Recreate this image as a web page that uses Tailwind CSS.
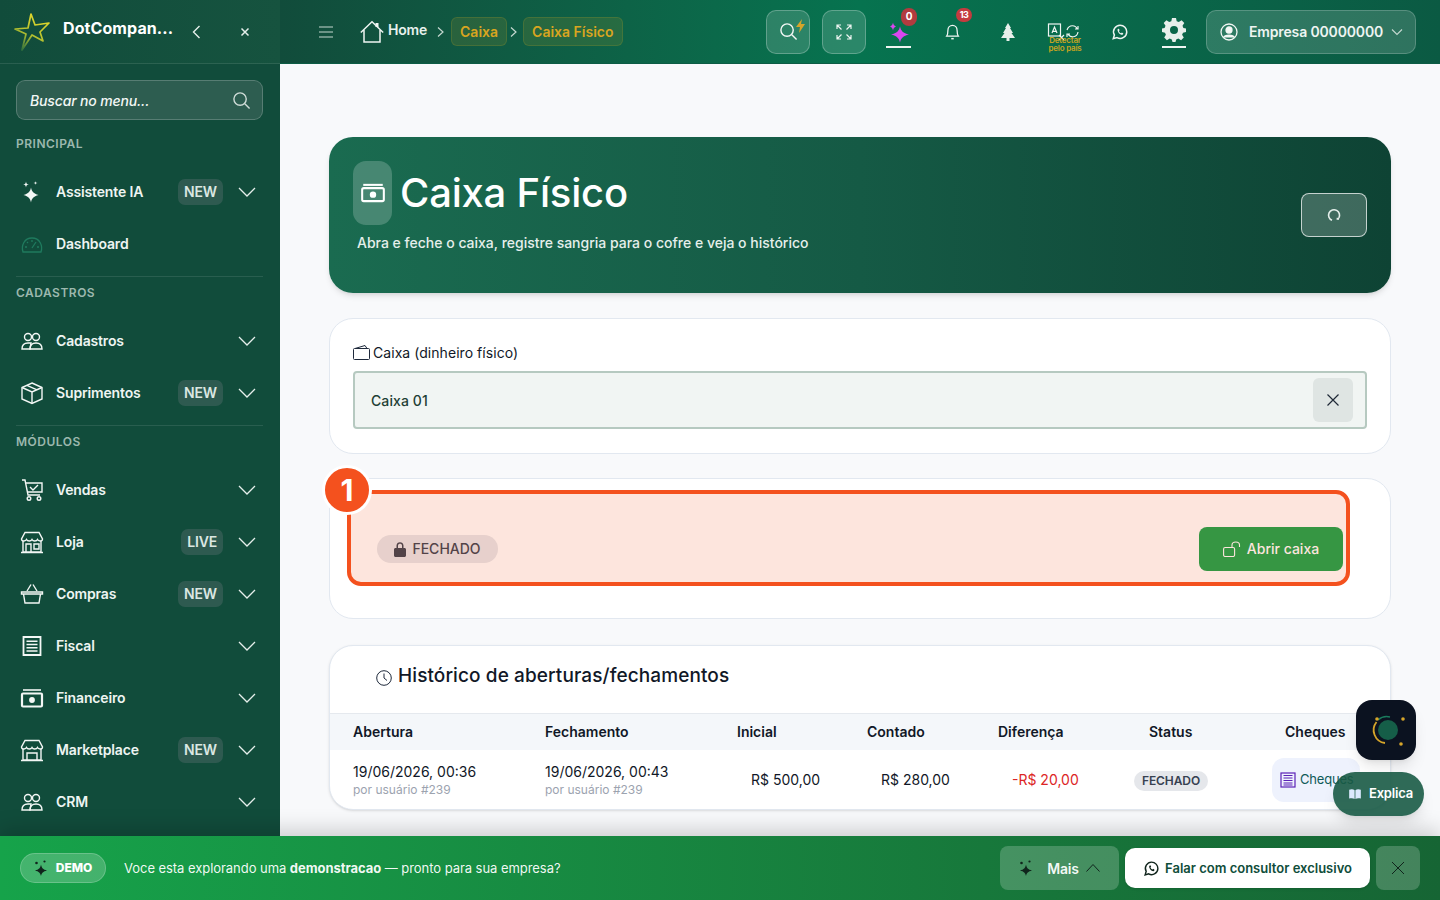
<!DOCTYPE html>
<html lang="pt-BR">
<head>
  <meta charset="UTF-8" />
  <title>Caixa Físico</title>
  <script src="https://cdn.jsdelivr.net/npm/@tailwindcss/browser@4"></script>
</head>
<body class="font-['Inter',sans-serif] text-[#111827] overflow-hidden">
<div class="relative w-[1440px] h-[900px] flex flex-col overflow-hidden">

  <div class="flex h-[836px]">
    <!-- Sidebar -->
    <aside class="w-[280px] shrink-0 bg-[#114c3b] text-[#eef5f2] overflow-hidden">
      <div class="h-[64px] flex items-center border-b border-white/10 bg-gradient-to-r from-[#114c3b] to-[#16533f]">
        <svg class="ml-[14px] w-[36px] h-[38px]" viewBox="0 0 36 38" fill="none">
          <defs><linearGradient id="star" x1="0.700" y1="0" x2="0.200" y2="1"><stop offset="0" stop-color="#e4d92c"/><stop offset="0.550" stop-color="#b5c12f"/><stop offset="1" stop-color="#2f6f3d"/></linearGradient></defs>
          <path d="M17 1 L21 12 L35 10 L26 19 L29 28 L18 22 L8 37 L12 21 L1 16 L14 15 Z" stroke="url(#star)" stroke-width="1.700" stroke-linejoin="round"/>
        </svg>
        <span class="ml-[13px] w-[112px] text-[16px] font-bold text-white tracking-[0.1px] mb-[8px] whitespace-nowrap">DotCompan...</span>
        <svg class="ml-[14px] w-[16px] h-[16px]" viewBox="0 0 16 16" fill="none" stroke="#e5efeb" stroke-width="1.400"><path d="M10.500 2 L4.500 8 L10.500 14"/></svg>
        <svg class="ml-[34px] w-[12px] h-[12px]" viewBox="0 0 12 12" fill="none" stroke="#e5efeb" stroke-width="1.500"><path d="M2.500 2.500 L9.500 9.500 M9.500 2.500 L2.500 9.500"/></svg>
      </div>

      <div class="px-[16px] pt-[16px]">
        <div class="h-[40px] w-[247px] flex items-center justify-between pl-[13px] pr-[11px] rounded-[9px] bg-[#2d5d50] border border-white/20">
          <span class="text-[14px] italic font-medium tracking-[-0.15px] text-[#f3f7f5]">Buscar no menu...</span>
          <svg class="w-[19px] h-[19px]" viewBox="0 0 20 20" fill="none" stroke="#cfdcd7" stroke-width="1.500"><circle cx="8.500" cy="8.500" r="6.500"/><path d="M13.500 13.500 L18.500 18.500"/></svg>
        </div>
      </div>

      <div class="h-[20px] mt-[14px] ml-[16px] text-[12px] leading-[20px] font-semibold tracking-[0.5px] text-[#9cb8ae]">PRINCIPAL</div>
      <div class="mt-[12px] text-[14px] font-semibold tracking-[-0.15px]">
        <div class="h-[52px] flex items-center pl-[20px] pr-[24px]">
          <svg class="w-[24px] h-[24px] shrink-0" viewBox="0 0 24 24" fill="#f3f7f5"><path d="M11 7.500 C11.800 11.500 13.500 13.500 18.500 15 C13.500 16.500 11.800 18.500 11 22.500 C10.200 18.500 8.500 16.500 3.500 15 C8.500 13.500 10.200 11.500 11 7.500Z"/><path d="M6 1.500 C6.300 3.700 6.800 4.200 9 4.500 C6.800 4.800 6.300 5.300 6 7.500 C5.700 5.300 5.200 4.800 3 4.500 C5.200 4.200 5.700 3.700 6 1.500Z"/><path d="M15.500 1 C15.700 2.500 16 2.800 17.500 3 C16 3.200 15.700 3.500 15.500 5 C15.300 3.500 15 3.200 13.500 3 C15 2.800 15.300 2.500 15.500 1Z"/></svg>
          <span class="ml-[12px] flex-1 mb-[2px]">Assistente IA</span>
          <span class="h-[26px] px-[6px] rounded-[7px] bg-[#2e5a50] text-[#dbe7e2] leading-[26px]">NEW</span>
          <svg class="ml-[15px] w-[18px] h-[18px] shrink-0" viewBox="0 0 18 18" fill="none" stroke="#e5efeb" stroke-width="1.300"><path d="M1 5 L9 13 L17 5"/></svg>
        </div>
        <div class="h-[52px] flex items-center pl-[20px] pr-[24px]">
          <svg class="w-[24px] h-[24px] shrink-0" viewBox="0 0 24 24" fill="none" stroke="#1f7a5e" stroke-width="1.300"><path d="M3 20 H21 C23 14 20 6 12 6 C4 6 1 14 3 20Z"/><path d="M12 16 L16 10 M5 15 H7 M17 15 H19 M12 8 V10 M7 10 L8 11"/></svg>
          <span class="ml-[12px] flex-1 mb-[2px]">Dashboard</span>
        </div>
      </div>

      <div class="ml-[16px] w-[247px] mt-[6px] h-px bg-white/10"></div>
      <div class="h-[20px] mt-[6px] ml-[16px] text-[12px] leading-[20px] font-semibold tracking-[0.5px] text-[#9cb8ae]">CADASTROS</div>
      <div class="mt-[12px] text-[14px] font-semibold tracking-[-0.15px]">
        <div class="h-[52px] flex items-center pl-[20px] pr-[24px]">
          <svg class="w-[24px] h-[24px] shrink-0" viewBox="0 0 24 24" fill="none" stroke="#f3f7f5" stroke-width="1.400"><circle cx="8" cy="8" r="3.500"/><circle cx="16" cy="8" r="3.500"/><path d="M2 20 C2 15 5 14 8 14 L11 14 L10 20 Z"/><path d="M10 20 C10 15 13 14 16 14 C19 14 22 15 22 20 Z"/></svg>
          <span class="ml-[12px] flex-1 mb-[2px]">Cadastros</span>
          <svg class="ml-[15px] w-[18px] h-[18px] shrink-0" viewBox="0 0 18 18" fill="none" stroke="#e5efeb" stroke-width="1.300"><path d="M1 5 L9 13 L17 5"/></svg>
        </div>
        <div class="h-[52px] flex items-center pl-[20px] pr-[24px]">
          <svg class="w-[24px] h-[24px] shrink-0" viewBox="0 0 24 24" fill="none" stroke="#f3f7f5" stroke-width="1.400"><path d="M12 2 L22 6.500 V18 L12 22.500 L2 18 V6.500 Z"/><path d="M2 6.500 L12 11 L22 6.500 M12 11 V22.500 M7 4.300 L17 8.800"/></svg>
          <span class="ml-[12px] flex-1 mb-[2px]">Suprimentos</span>
          <span class="h-[26px] px-[6px] rounded-[7px] bg-[#2e5a50] text-[#dbe7e2] leading-[26px]">NEW</span>
          <svg class="ml-[15px] w-[18px] h-[18px] shrink-0" viewBox="0 0 18 18" fill="none" stroke="#e5efeb" stroke-width="1.300"><path d="M1 5 L9 13 L17 5"/></svg>
        </div>
      </div>

      <div class="ml-[16px] w-[247px] mt-[6px] h-px bg-white/10"></div>
      <div class="h-[20px] mt-[6px] ml-[16px] text-[12px] leading-[20px] font-semibold tracking-[0.5px] text-[#9cb8ae]">MÓDULOS</div>
      <div class="mt-[12px] text-[14px] font-semibold tracking-[-0.15px]">
        <div class="h-[52px] flex items-center pl-[20px] pr-[24px]">
          <svg class="w-[24px] h-[24px] shrink-0" viewBox="0 0 24 24" fill="none" stroke="#f3f7f5" stroke-width="1.400"><path d="M2 2 H5 L8 17 H20"/><path d="M6 5 H22 V14 H7.500"/><path d="M10 9 L13 12 L18 7"/><circle cx="9" cy="20.500" r="1.800"/><circle cx="19" cy="20.500" r="1.800"/></svg>
          <span class="ml-[12px] flex-1 mb-[2px]">Vendas</span>
          <svg class="ml-[15px] w-[18px] h-[18px] shrink-0" viewBox="0 0 18 18" fill="none" stroke="#e5efeb" stroke-width="1.300"><path d="M1 5 L9 13 L17 5"/></svg>
        </div>
        <div class="h-[52px] flex items-center pl-[20px] pr-[24px]">
          <svg class="w-[24px] h-[24px] shrink-0" viewBox="0 0 24 24" fill="none" stroke="#f3f7f5" stroke-width="1.400"><path d="M5 2.500 H19 L22.500 9 C22.500 11.500 18.500 11.500 17.500 9.500 C16.500 11.500 13 11.500 12 9.500 C11 11.500 7.500 11.500 6.500 9.500 C5.500 11.500 1.500 11.500 1.500 9 Z"/><path d="M3 11 V22 H21 V11 M1 22.500 H23 M6 22 V14 H11 V22 M14 14 H19 V19 H14 Z"/></svg>
          <span class="ml-[12px] flex-1 mb-[2px]">Loja</span>
          <span class="h-[26px] px-[6px] rounded-[7px] bg-[#2e5a50] text-[#dbe7e2] leading-[26px]">LIVE</span>
          <svg class="ml-[15px] w-[18px] h-[18px] shrink-0" viewBox="0 0 18 18" fill="none" stroke="#e5efeb" stroke-width="1.300"><path d="M1 5 L9 13 L17 5"/></svg>
        </div>
        <div class="h-[52px] flex items-center pl-[20px] pr-[24px]">
          <svg class="w-[24px] h-[24px] shrink-0" viewBox="0 0 24 24" fill="none" stroke="#f3f7f5" stroke-width="1.400"><path d="M1.500 10 H22.500 V12 H1.500 Z"/><path d="M3.500 12 L5 21 H19 L20.500 12"/><path d="M7 9 L11 2.500 M17 9 L13 2.500"/></svg>
          <span class="ml-[12px] flex-1 mb-[2px]">Compras</span>
          <span class="h-[26px] px-[6px] rounded-[7px] bg-[#2e5a50] text-[#dbe7e2] leading-[26px]">NEW</span>
          <svg class="ml-[15px] w-[18px] h-[18px] shrink-0" viewBox="0 0 18 18" fill="none" stroke="#e5efeb" stroke-width="1.300"><path d="M1 5 L9 13 L17 5"/></svg>
        </div>
        <div class="h-[52px] flex items-center pl-[20px] pr-[24px]">
          <svg class="w-[24px] h-[24px] shrink-0" viewBox="0 0 24 24" fill="none" stroke="#f3f7f5" stroke-width="1.800"><path d="M3.500 3 H20.500 V21 H3.500 Z"/><path d="M6.500 7.200 H17.500 M6.500 10.500 H17.500 M6.500 13.800 H17.500 M6.500 17.100 H17.500" stroke-width="1.500"/></svg>
          <span class="ml-[12px] flex-1 mb-[2px]">Fiscal</span>
          <svg class="ml-[15px] w-[18px] h-[18px] shrink-0" viewBox="0 0 18 18" fill="none" stroke="#e5efeb" stroke-width="1.300"><path d="M1 5 L9 13 L17 5"/></svg>
        </div>
        <div class="h-[52px] flex items-center pl-[20px] pr-[24px]">
          <svg class="w-[24px] h-[24px] shrink-0" viewBox="0 0 24 24" fill="none" stroke="#f3f7f5" stroke-width="2.200"><path d="M3 4 H21" stroke-width="1.600"/><rect x="2" y="7.500" width="20" height="13" rx="1"/><circle cx="12" cy="14" r="1.800" fill="#f3f7f5"/></svg>
          <span class="ml-[12px] flex-1 mb-[2px]">Financeiro</span>
          <svg class="ml-[15px] w-[18px] h-[18px] shrink-0" viewBox="0 0 18 18" fill="none" stroke="#e5efeb" stroke-width="1.300"><path d="M1 5 L9 13 L17 5"/></svg>
        </div>
        <div class="h-[52px] flex items-center pl-[20px] pr-[24px]">
          <svg class="w-[24px] h-[24px] shrink-0" viewBox="0 0 24 24" fill="none" stroke="#f3f7f5" stroke-width="1.400"><path d="M5 2.500 H19 L22.500 9 C22.500 11.500 18.500 11.500 17.500 9.500 C16.500 11.500 13 11.500 12 9.500 C11 11.500 7.500 11.500 6.500 9.500 C5.500 11.500 1.500 11.500 1.500 9 Z"/><path d="M3 11 V22 H21 V11 M1 22.500 H23 M7 22 V15 H17 V22"/></svg>
          <span class="ml-[12px] flex-1 mb-[2px]">Marketplace</span>
          <span class="h-[26px] px-[6px] rounded-[7px] bg-[#2e5a50] text-[#dbe7e2] leading-[26px]">NEW</span>
          <svg class="ml-[15px] w-[18px] h-[18px] shrink-0" viewBox="0 0 18 18" fill="none" stroke="#e5efeb" stroke-width="1.300"><path d="M1 5 L9 13 L17 5"/></svg>
        </div>
        <div class="h-[52px] flex items-center pl-[20px] pr-[24px]">
          <svg class="w-[24px] h-[24px] shrink-0" viewBox="0 0 24 24" fill="none" stroke="#f3f7f5" stroke-width="1.400"><circle cx="8" cy="8" r="3.500"/><circle cx="16" cy="8" r="3.500"/><path d="M2 20 C2 15 5 14 8 14 L11 14 L10 20 Z"/><path d="M10 20 C10 15 13 14 16 14 C19 14 22 15 22 20 Z"/></svg>
          <span class="ml-[12px] flex-1 mb-[2px]">CRM</span>
          <svg class="ml-[15px] w-[18px] h-[18px] shrink-0" viewBox="0 0 18 18" fill="none" stroke="#e5efeb" stroke-width="1.300"><path d="M1 5 L9 13 L17 5"/></svg>
        </div>
      </div>
    </aside>

    <div class="flex-1 min-w-0 flex flex-col bg-[#f8f9fb]">
      <!-- Top bar -->
      <header class="h-[64px] shrink-0 flex items-center bg-gradient-to-r from-[#114c3b] via-[#06734f] to-[#0b5a43] border-b border-[#0d5c45]">
        <svg class="ml-[39px] w-[14px] h-[12px]" viewBox="0 0 14 12" fill="none" stroke="#c5d8d0" stroke-width="1.200"><path d="M0 1 H14 M0 6 H14 M0 11 H14"/></svg>
        <svg class="ml-[27px] w-[24px] h-[24px]" viewBox="0 0 24 24" fill="none" stroke="#eef5f2" stroke-width="1.500"><path d="M0.800 12.500 L12 1.800 L23.200 12.500 M4 10 V22 H20 V10"/><path d="M17 3 V7" stroke-width="3"/></svg>
        <span class="ml-[4px] mb-[4px] text-[14px] font-semibold tracking-[-0.2px] text-[#e8f1ed]">Home</span>
        <svg class="ml-[10px] w-[7px] h-[10px]" viewBox="0 0 7 10" fill="none" stroke="#c5d8d0" stroke-width="1.200"><path d="M1 0.500 L6 5 L1 9.500"/></svg>
        <span class="ml-[7px] h-[29px] px-[8px] flex items-center rounded-[6px] bg-[#b9a22a]/15 border border-[#b9a22a]/20 text-[14px] font-semibold text-[#d9a520]">Caixa</span>
        <svg class="ml-[3px] w-[7px] h-[10px]" viewBox="0 0 7 10" fill="none" stroke="#c5d8d0" stroke-width="1.200"><path d="M1 0.500 L6 5 L1 9.500"/></svg>
        <span class="ml-[6px] h-[29px] px-[8px] flex items-center rounded-[6px] bg-[#b9a22a]/15 border border-[#b9a22a]/20 text-[14px] font-semibold text-[#d9a520]">Caixa Físico</span>

        <div class="ml-auto flex items-center pr-[24px]">
          <div class="relative w-[44px] h-[44px] flex items-center justify-center rounded-[10px] bg-white/15 border border-white/25">
            <svg class="w-[19px] h-[19px]" viewBox="0 0 20 20" fill="none" stroke="#f3f7f5" stroke-width="1.500"><circle cx="8.500" cy="8.500" r="6.500"/><path d="M13.500 13.500 L18.500 18.500"/></svg>
            <svg class="absolute top-[8px] right-[4px] w-[9px] h-[14px]" viewBox="0 0 9 14" fill="#d6a52a"><path d="M6 0 L0 8 H4 L3 14 L9 5 H5 Z"/></svg>
          </div>
          <div class="ml-[12px] w-[44px] h-[44px] flex items-center justify-center rounded-[10px] bg-white/15 border border-white/25">
            <svg class="w-[18px] h-[18px]" viewBox="0 0 18 18" fill="none" stroke="#eef5f2" stroke-width="1.200"><path d="M2 6 V2 H6 M2 2 L6.500 6.500 M12 2 H16 V6 M16 2 L11.500 6.500 M2 12 V16 H6 M2 16 L6.500 11.500 M12 16 H16 V12 M16 16 L11.500 11.500"/></svg>
          </div>
          <div class="relative ml-[20px] w-[25px] h-[44px] flex items-center justify-center">
            <svg class="w-[24px] h-[24px] mt-[1px]" viewBox="0 0 24 24" fill="#d946ef"><path d="M13 6.500 C14 11 16 13 22 14.500 C16 16 14 18 13 22.500 C12 18 10 16 4 14.500 C10 13 12 11 13 6.500Z"/><path d="M6 2.500 C6.500 5 7 5.500 9 6.500 C7 7.500 6.500 8 6 10.500 C5.500 8 5 7.500 3 6.500 C5 5.500 5.500 5 6 2.500Z"/></svg>
            <span class="absolute bottom-[6px] left-0 w-[25px] h-[2px] bg-[#eef5f2]"></span>
            <span class="absolute top-[-2px] right-[-6px] w-[16px] h-[18px] rounded-full bg-[#b23b3f] text-white text-[10px] font-bold flex items-center justify-center">0</span>
          </div>
          <div class="relative ml-[29px] w-[24px] h-[24px]">
            <svg class="w-[15px] h-[18px] mx-auto mt-[3px]" viewBox="0 0 18 20" fill="none" stroke="#f3f7f5" stroke-width="1.500"><path d="M2 15 C3.500 13 3.500 11 3.500 8 C3.500 4.500 6 2 9 2 C12 2 14.500 4.500 14.500 8 C14.500 11 14.500 13 16 15 Z"/><path d="M7.500 18 H10.500" stroke-width="1.800"/></svg>
            <span class="absolute top-[-12px] left-[16px] w-[16px] h-[14px] rounded-full bg-[#c43b3f] text-white text-[9px] font-bold tracking-[-0.5px] flex items-center justify-center">13</span>
          </div>
          <svg class="ml-[37px] w-[14px] h-[18px]" viewBox="0 0 14 18" fill="#e7efeb"><path d="M7 0 L10 5 H9 L12 10 H10.500 L14 15 H8.500 V18 H5.500 V15 H0 L3.500 10 H2 L5 5 H4 Z"/></svg>
          <div class="relative ml-[32px] w-[36px] h-[24px]">
            <svg class="w-[36px] h-[20px] mt-[3px]" viewBox="0 0 36 20" fill="none" stroke="#eef5f2" stroke-width="1.200"><rect x="1.500" y="1" width="12" height="12"/><path d="M5 10 L7.500 4 L10 10 M6 8.300 H9"/><path d="M12 12 L17 17 M17 12 L12 17"/><path d="M20 7 C22 1 29 2 30 6 M31 9 C30 15 23 15 21 11 M28 6 H31 V3 M23 11 H20 V14"/></svg>
            <span class="absolute top-[16px] left-0 w-[36px] text-[8px] leading-[8px] font-semibold text-[#c9a520] text-center tracking-[-0.2px] whitespace-nowrap">Detectar<br />pelo país</span>
          </div>
          <svg class="ml-[28px] w-[18px] h-[18px]" viewBox="0 0 24 24" fill="none" stroke="#eef5f2" stroke-width="2"><path d="M3 21 L4.500 16 C1 10 6 3 12 3 C17.500 3 21 7.500 21 12 C21 18 14 23 8 19.500 Z"/><path d="M9 8 C8 10 10 15 15 16 L16.500 14 L14.500 12.500 L13.500 13.500 C12 13 11 12 10.500 10.500 L11.500 9.500 L10.500 7.500 Z" fill="#eef5f2" stroke="none"/></svg>
          <div class="relative ml-[32px] w-[26px] h-[26px]">
            <svg class="w-[24px] h-[24px] mx-auto mt-[-1px]" viewBox="0 0 24 24" fill="#e7efeb"><path fill-rule="evenodd" d="M10 0 H14 L14.700 3.200 L16.800 4.100 L19.600 2.300 L22.300 5 L20.500 7.800 L21.400 9.900 L24 10.500 V14 L21 14.700 L20.100 16.800 L21.800 19.600 L19.100 22.300 L16.300 20.500 L14.200 21.400 L13.500 24 H10.500 L9.800 21.400 L7.700 20.500 L4.900 22.300 L2.200 19.600 L3.900 16.800 L3 14.700 L0 14 V10.500 L2.600 9.900 L3.500 7.800 L1.700 5 L4.400 2.300 L7.200 4.100 L9.300 3.200 Z M12 8 A4 4 0 1 0 12 16 A4 4 0 1 0 12 8Z"/></svg>
            <span class="absolute top-[27px] left-[1px] w-[24px] h-[2px] bg-[#eef5f2]"></span>
          </div>
          <div class="ml-[19px] w-[210px] h-[44px] flex items-center rounded-[10px] bg-white/15 border border-white/20 pl-[13px]">
            <svg class="w-[18px] h-[18px]" viewBox="0 0 18 18" fill="none" stroke="#f3f7f5" stroke-width="1.300"><circle cx="9" cy="9" r="8"/><circle cx="9" cy="7" r="3" fill="#f3f7f5"/><path d="M3.500 14.500 C5 11.500 13 11.500 14.500 14.500" fill="#f3f7f5"/></svg>
            <span class="ml-[11px] text-[14px] font-semibold tracking-[-0.15px] text-[#eef5f2] whitespace-nowrap">Empresa 00000000</span>
            <svg class="ml-[8px] w-[12px] h-[12px]" viewBox="0 0 12 12" fill="none" stroke="#c5d8d0" stroke-width="1.100"><path d="M1 3.500 L6 8.500 L11 3.500"/></svg>
          </div>
        </div>
      </header>

      <!-- Content -->
      <main class="flex-1 overflow-hidden pl-[49px] pr-[49px] pt-[73px]">
        <section class="h-[156px] rounded-[24px] bg-gradient-to-r from-[#1a6b50] via-[#155a45] to-[#0e4334] shadow-md flex items-center justify-between px-[24px] text-white">
          <div class="mb-[16px]">
            <div class="flex items-center">
              <div class="w-[39px] h-[64px] flex items-center justify-center rounded-[13px] bg-white/20">
                <svg class="w-[26px] h-[26px]" viewBox="0 0 24 24" fill="none" stroke="#fff" stroke-width="1.900"><path d="M3 4.500 H21"/><rect x="2" y="7.500" width="20" height="12" rx="1.500"/><circle cx="12" cy="13.500" r="2" fill="#fff"/></svg>
              </div>
              <h1 class="ml-[8px] text-[40px] font-medium tracking-[-0.2px] leading-[64px]">Caixa Físico</h1>
            </div>
            <p class="mt-[8px] ml-[4px] text-[14px] leading-[20px] font-medium text-[#e5efeb]">Abra e feche o caixa, registre sangria para o cofre e veja o histórico</p>
          </div>
          <button class="w-[66px] h-[44px] flex items-center justify-center rounded-[8px] bg-white/20 border border-white/70">
            <svg class="w-[14px] h-[14px]" viewBox="0 0 14 14" fill="none" stroke="#e5efeb" stroke-width="1.600"><path d="M5 12.300 A5.500 5.500 0 1 1 11.800 10"/><path d="M10.800 11.800 V9.800" stroke-width="2.400"/></svg>
          </button>
        </section>

        <section class="mt-[25px] h-[136px] rounded-[24px] bg-white border border-[#e2e8f0] px-[23px] pt-[23px]">
          <div class="h-[20px] flex items-center text-[14px] tracking-[0.05px]">
            <svg class="w-[17px] h-[15px] mr-[3px]" viewBox="0 0 17 15" fill="none" stroke="#1e293b" stroke-width="1"><rect x="0.500" y="3.500" width="16" height="11" rx="1"/><path d="M2 3.500 L12 0.500 L14 3.500"/></svg>
            Caixa (dinheiro físico)
          </div>
          <div class="mt-[9px] h-[58px] flex items-center justify-between pl-[16px] pr-[12px] rounded-[4px] bg-[#f1f5f3] border-2 border-[#b6c9c0] text-[14px] font-medium tracking-[0.1px] text-[#1f3f35]">
            <span>Caixa 01</span>
            <span class="w-[40px] h-[44px] flex items-center justify-center rounded-[6px] bg-[#dfe5e3]">
              <svg class="w-[14px] h-[14px]" viewBox="0 0 14 14" fill="none" stroke="#1f2937" stroke-width="1.200"><path d="M1.500 1.500 L12.500 12.500 M12.500 1.500 L1.500 12.500"/></svg>
            </span>
          </div>
        </section>

        <section class="mt-[24px] h-[141px] rounded-[24px] bg-white border border-[#e2e8f0] px-[47px] flex items-center justify-between">
          <span class="h-[28px] w-[121px] flex items-center justify-center rounded-full bg-[#e5e7eb] text-[14px] font-medium text-[#374151]">
            <svg class="w-[12px] h-[16px] mr-[6px]" viewBox="0 0 12 16" fill="#374151"><path fill-rule="evenodd" d="M2.500 7 V4.500 C2.500 0 9.500 0 9.500 4.500 V7 H10.500 C11.300 7 12 7.700 12 8.500 V14.500 C12 15.300 11.300 16 10.500 16 H1.500 C0.700 16 0 15.300 0 14.500 V8.500 C0 7.700 0.700 7 1.500 7 Z M4 7 H8 V4.500 C8 2 4 2 4 4.500 Z"/></svg>
            <span>FECHADO</span>
          </span>
          <button class="w-[144px] h-[44px] flex items-center justify-center rounded-[8px] bg-[#16a34a] text-white text-[14px] font-medium">
            <svg class="w-[18px] h-[16px] mr-[6px]" viewBox="0 0 18 16" fill="none" stroke="#fff" stroke-width="1.100"><rect x="0.600" y="6.500" width="11" height="9" rx="1.500"/><path d="M9 6.500 V4 C9 0 16.500 0 16.500 4 V6"/></svg>
            <span>Abrir caixa</span>
          </button>
        </section>

        <section class="mt-[26px] h-[165px] rounded-[24px] bg-white border border-[#e2e8f0] shadow-sm overflow-hidden">
          <div class="h-[68px] flex items-center pl-[46px] pb-[6px] border-b border-[#e5e9ee]">
            <svg class="w-[16px] h-[16px] mr-[6px] mt-[2px]" viewBox="0 0 16 16" fill="none" stroke="#1e293b" stroke-width="1"><circle cx="8" cy="8" r="7.300"/><path d="M8 3.500 V8 L11 10.500"/></svg>
            <h2 class="text-[19px] font-medium tracking-[0.1px] text-[#111827]">Histórico de aberturas/fechamentos</h2>
          </div>
          <table class="w-full table-fixed text-[14px] border-collapse">
            <colgroup>
              <col class="w-[192px]" /><col class="w-[192px]" /><col class="w-[130px]" /><col class="w-[131px]" /><col class="w-[151px]" /><col class="w-[136px]" /><col />
            </colgroup>
            <thead>
              <tr class="h-[36px] bg-[#f4f7fa] text-left">
                <th class="pl-[23px] pb-[2px] font-semibold">Abertura</th>
                <th class="pl-[23px] pb-[2px] font-semibold">Fechamento</th>
                <th class="pl-[23px] pb-[2px] font-semibold">Inicial</th>
                <th class="pl-[23px] pb-[2px] font-semibold">Contado</th>
                <th class="pl-[23px] pb-[2px] font-semibold">Diferença</th>
                <th class="pl-[23px] pb-[2px] font-semibold">Status</th>
                <th class="pl-[23px] pb-[2px] font-semibold">Cheques</th>
              </tr>
            </thead>
            <tbody>
              <tr class="h-[60px]">
                <td class="pl-[23px] pt-[2px] leading-[18px]"><div>19/06/2026, 00:36</div><div class="text-[12px] text-[#9ca3af]">por usuário #239</div></td>
                <td class="pl-[23px] pt-[2px] leading-[18px]"><div>19/06/2026, 00:43</div><div class="text-[12px] text-[#9ca3af]">por usuário #239</div></td>
                <td class="pl-[37px] pb-[2px]">R$ 500,00</td>
                <td class="pl-[37px] pb-[2px]">R$ 280,00</td>
                <td class="pl-[37px] pb-[2px] text-[#dc2626]">-R$ 20,00</td>
                <td class="pl-[8px]"><span class="inline-flex h-[20px] px-[8px] items-center rounded-full bg-[#e5e7eb] text-[12px] font-semibold tracking-[-0.1px] text-[#374151]">FECHADO</span></td>
                <td class="pl-[10px]">
                  <span class="w-[88px] h-[44px] flex items-center pl-[8px] rounded-[12px] bg-[#eef2fd] text-[13px] tracking-[-0.2px] text-[#0f5a58] whitespace-nowrap">
                    <svg class="w-[16px] h-[16px] mr-[4px] shrink-0" viewBox="0 0 16 16" fill="none" stroke="#5b21b6" stroke-width="1.200"><rect x="1" y="1" width="14" height="14"/><path d="M3.500 3.500 H12.500 M3.500 6 H12.500 M3.500 8.500 H12.500 M3.500 11 H12.500 M3.500 13 H12.500"/></svg>
                    Cheques
                  </span>
                </td>
              </tr>
            </tbody>
          </table>
        </section>
      </main>
    </div>
  </div>

  <!-- Demo banner -->
  <footer class="relative h-[64px] shrink-0 flex items-center bg-gradient-to-r from-[#16a34a] to-[#166534] shadow-[0_-6px_20px_rgba(0,0,0,0.18)] pl-[20px] pr-[20px]">
    <span class="w-[86px] h-[30px] flex items-center justify-center rounded-full bg-white/20 border border-white/20 text-[12px] font-extrabold text-white">
      <svg class="w-[14px] h-[16px] mr-[8px]" viewBox="0 0 14 16" fill="#10241c"><path d="M7 4.500 C7.700 8 9 9.500 13 10.500 C9 11.500 7.700 13 7 16 C6.300 13 5 11.500 1 10.500 C5 9.500 6.300 8 7 4.500Z"/><circle cx="2.500" cy="3" r="1.300"/><circle cx="10.500" cy="1.500" r="1.100"/></svg>
      DEMO
    </span>
    <p class="ml-[18px] mt-[2px] text-[13px] tracking-[-0.05px] text-white/95 whitespace-nowrap">Voce esta explorando uma <strong class="font-bold">demonstracao</strong> — pronto para sua empresa?</p>
    <div class="ml-auto flex items-center">
      <button class="w-[119px] h-[44px] flex items-center justify-center rounded-[8px] bg-white/20 text-[14px] font-semibold tracking-[-0.2px] text-white/95">
        <svg class="w-[14px] h-[16px] mr-[14px]" viewBox="0 0 14 16" fill="#10241c"><path d="M7 4.500 C7.700 8 9 9.500 13 10.500 C9 11.500 7.700 13 7 16 C6.300 13 5 11.500 1 10.500 C5 9.500 6.300 8 7 4.500Z"/><circle cx="2.500" cy="3" r="1.300"/><circle cx="10.500" cy="1.500" r="1.100"/></svg>
        Mais
        <svg class="ml-[7px] w-[14px] h-[10px]" viewBox="0 0 14 10" fill="none" stroke="#10241c" stroke-width="1"><path d="M0.500 8.500 L7 1.500 L13.500 8.500"/></svg>
      </button>
      <button class="ml-[6px] w-[245px] h-[40px] flex items-center justify-center rounded-[10px] bg-white text-[13px] font-semibold text-[#0f4d3a] shadow-sm">
        <svg class="w-[17px] h-[17px] mr-[5px]" viewBox="0 0 24 24" fill="none" stroke="#10241c" stroke-width="2"><path d="M3 21 L4.500 16 C1 10 6 3 12 3 C17.500 3 21 7.500 21 12 C21 18 14 23 8 19.500 Z"/><path d="M9 8 C8 10 10 15 15 16 L16.500 14 L14.500 12.500 L13.500 13.500 C12 13 11 12 10.500 10.500 L11.500 9.500 L10.500 7.500 Z" fill="#10241c" stroke="none"/></svg>
        <span class="mt-[2px]">Falar com consultor exclusivo</span>
      </button>
      <button class="ml-[6px] w-[44px] h-[44px] flex items-center justify-center rounded-[8px] bg-white/20">
        <svg class="w-[14px] h-[14px]" viewBox="0 0 14 14" fill="none" stroke="#10241c" stroke-width="1"><path d="M1 1 L13 13 M13 1 L1 13"/></svg>
      </button>
    </div>
  </footer>

  <!-- Annotation over the status card -->
  <div class="absolute left-[347px] top-[490px] w-[1003px] h-[96px] rounded-[14px] border-[4px] border-[#f4511e] bg-[#f4511e]/15 pointer-events-none"></div>
  <div class="absolute left-[322px] top-[465px] w-[50px] h-[50px] rounded-full bg-[#f4511e] border-[3px] border-white flex items-center justify-center text-white text-[30px] font-bold">1</div>

  <!-- Floating widgets -->
  <div class="absolute left-[1356px] top-[700px] w-[60px] h-[60px] rounded-[16px] bg-[#0b1220] shadow-lg flex items-center justify-center">
    <svg class="w-[44px] h-[44px]" viewBox="0 0 44 44" fill="none">
      <circle cx="24" cy="22" r="10" fill="#155e48"/>
      <path d="M26 9 A13 13 0 0 0 14 12" stroke="#1a7a5c" stroke-width="1.500"/>
      <path d="M12.500 14 A13 13 0 0 0 21 35" stroke="#d6a52a" stroke-width="1.800"/>
      <circle cx="13" cy="11" r="1.800" fill="#d6a52a"/><circle cx="39" cy="11" r="1.800" fill="#d6a52a"/><circle cx="37" cy="36" r="1.800" fill="#d6a52a"/>
    </svg>
  </div>
  <div class="absolute left-[1333px] top-[772px] w-[91px] h-[44px] pl-[16px] rounded-full bg-[#185a45]/90 shadow-lg flex items-center text-[13px] font-semibold tracking-[-0.2px] text-white">
    <svg class="w-[12px] h-[10px] mr-[8px]" viewBox="0 0 14 12" fill="#dbeafe"><path d="M0 1 C2 0 5 0 6.500 1.500 V12 C5 10.800 2 10.800 0 11.500 Z M14 1 C12 0 9 0 7.500 1.500 V12 C9 10.800 12 10.800 14 11.500 Z"/></svg>
    Explica
  </div>
</div>
</body>
</html>
